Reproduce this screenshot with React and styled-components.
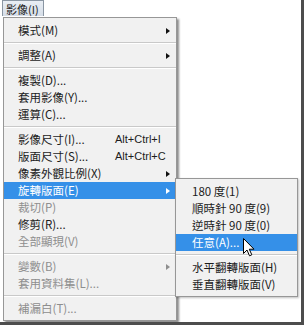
import React from "react";
import styled, { createGlobalStyle } from "styled-components";

const GlobalStyle = createGlobalStyle`
  html, body {
    margin: 0;
    padding: 0;
    background: #ffffff;
  }
  body {
    font-family: "Noto Sans CJK TC", "Liberation Sans", sans-serif;
  }
`;

const Frame = styled.div`
  position: relative;
  width: 304px;
  height: 325px;
  box-sizing: border-box;
  border-right: 3px solid #4d4d4d;
  border-bottom: 3px solid #4d4d4d;
  background: #ffffff;
  overflow: hidden;
`;

const MenuBar = styled.div`
  display: flex;
  height: 17px;
  padding-left: 2px;
`;

const BarItem = styled.div`
  display: flex;
  align-items: center;
  height: 16px;
  padding: 0 4px 0 3px;
  box-sizing: border-box;
  border: 1px solid #8a96a3;
  border-bottom: none;
  background: linear-gradient(#e9eef4, #d5dde7);
  font-size: 11px;
  color: #1a1a1a;
  line-height: 14px;
`;

const Menu = styled.div`
  width: 174px;
  margin-left: 3px;
  box-sizing: border-box;
  padding: 4px 0 3px;
  background: #f1f1f1;
  border: 1px solid #979797;
  box-shadow: 2px 2px 2px rgba(0, 0, 0, 0.45);
`;

const SubMenu = styled(Menu)`
  position: absolute;
  left: 175px;
  top: 178px;
  width: 123px;
  margin: 0;
  box-shadow: 1px 1px 2px rgba(0, 0, 0, 0.25);
`;

const Item = styled.div`
  display: grid;
  grid-template-columns: ${(p) => p.$textCol}px 1fr 10px;
  align-items: center;
  height: 17px;
  padding-left: ${(p) => p.$indent}px;
  font-size: 11.5px;
  line-height: 17px;
  white-space: nowrap;
  color: ${(p) => (p.$active ? "#ffffff" : p.$disabled ? "#8e8e8e" : "#1c1c1c")};
  background: ${(p) => (p.$active ? "#3590e8" : "transparent")};
`;

const Shortcut = styled.span`
  font-family: "Liberation Sans", sans-serif;
  font-size: 11px;
`;

const Arrow = styled.span`
  width: 0;
  height: 0;
  border-top: 3.5px solid transparent;
  border-bottom: 3.5px solid transparent;
  border-left: 4px solid
    ${(p) => (p.$active ? "#ffffff" : p.$disabled ? "#8e8e8e" : "#111111")};
`;

const Separator = styled.div`
  height: 8px;
  display: flex;
  flex-direction: column;
  justify-content: center;

  &::before {
    content: "";
    height: 1px;
    background: #c9c9c9;
  }
  &::after {
    content: "";
    height: 1px;
    background: #ffffff;
  }
`;

const Cursor = styled.svg`
  position: absolute;
  left: 243px;
  top: 238px;
`;

const mainItems = [
  { label: "模式(M)", arrow: true },
  "sep",
  { label: "調整(A)", arrow: true },
  "sep",
  { label: "複製(D)..." },
  { label: "套用影像(Y)..." },
  { label: "運算(C)..." },
  "sep",
  { label: "影像尺寸(I)...", shortcut: "Alt+Ctrl+I" },
  { label: "版面尺寸(S)...", shortcut: "Alt+Ctrl+C" },
  { label: "像素外觀比例(X)", arrow: true },
  { label: "旋轉版面(E)", arrow: true, active: true },
  { label: "裁切(P)", disabled: true },
  { label: "修剪(R)..." },
  { label: "全部顯現(V)", disabled: true },
  "sep",
  { label: "變數(B)", arrow: true, disabled: true },
  { label: "套用資料集(L)...", disabled: true },
  "sep",
  { label: "補漏白(T)...", disabled: true },
];

const subItems = [
  { label: "180 度(1)" },
  { label: "順時針 90 度(9)" },
  { label: "逆時針 90 度(0)" },
  { label: "任意(A)...", active: true },
  "sep",
  { label: "水平翻轉版面(H)" },
  { label: "垂直翻轉版面(V)" },
];

const renderItems = (items, indent, textCol) =>
  items.map((it, i) =>
    it === "sep" ? (
      <Separator key={i} />
    ) : (
      <Item
        key={i}
        $indent={indent}
        $textCol={textCol}
        $active={it.active}
        $disabled={it.disabled}
      >
        <span>{it.label}</span>
        <Shortcut>{it.shortcut}</Shortcut>
        {it.arrow ? <Arrow $active={it.active} $disabled={it.disabled} /> : <span />}
      </Item>
    )
  );

export default function App() {
  return (
    <>
      <GlobalStyle />
      <Frame>
        <MenuBar>
          <BarItem>影像(I)</BarItem>
        </MenuBar>
        <Menu>{renderItems(mainItems, 14, 97)}</Menu>
        <SubMenu>{renderItems(subItems, 16, 95)}</SubMenu>
        <Cursor width="12" height="19" viewBox="0 0 12 19">
          <path
            d="M0.5 0.5 L0.5 15.5 L4 12 L6.5 17.8 L8.8 16.8 L6.3 11.2 L11 11.2 Z"
            fill="#ffffff"
            stroke="#000000"
            strokeWidth="1"
            strokeLinejoin="round"
          />
        </Cursor>
      </Frame>
    </>
  );
}
